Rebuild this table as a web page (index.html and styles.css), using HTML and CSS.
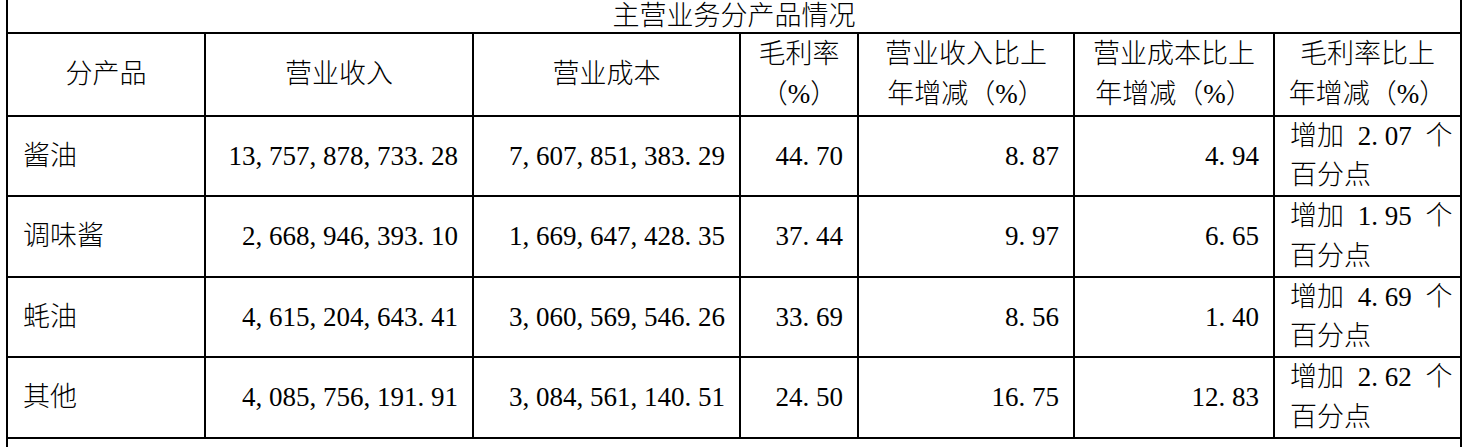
FILE: index.html
```html
<!DOCTYPE html>
<html lang="zh-CN">
<head>
<meta charset="utf-8">
<title>主营业务分产品情况</title>
<link rel="stylesheet" href="styles.css">
</head>
<body>
<table class="report">
  <colgroup>
    <col class="c1"><col class="c2"><col class="c3"><col class="c4"><col class="c5"><col class="c6"><col class="c7">
  </colgroup>
  <thead>
    <tr><th class="title" colspan="7">主营业务分产品情况</th></tr>
    <tr class="head">
      <th>分产品</th>
      <th>营业收入</th>
      <th>营业成本</th>
      <th>毛利率<br>（%）</th>
      <th>营业收入比上<br>年增减（%）</th>
      <th>营业成本比上<br>年增减（%）</th>
      <th>毛利率比上<br>年增减（%）</th>
    </tr>
  </thead>
  <tbody>
    <tr>
      <td class="name">酱油</td>
      <td class="num">13<span class="p">,</span>757<span class="p">,</span>878<span class="p">,</span>733<span class="p">.</span>28</td>
      <td class="num">7<span class="p">,</span>607<span class="p">,</span>851<span class="p">,</span>383<span class="p">.</span>29</td>
      <td class="num">44<span class="p">.</span>70</td>
      <td class="num">8<span class="p">.</span>87</td>
      <td class="num">4<span class="p">.</span>94</td>
      <td class="delta">增加 2<span class="p">.</span>07 个<br>百分点</td>
    </tr>
    <tr>
      <td class="name">调味酱</td>
      <td class="num">2<span class="p">,</span>668<span class="p">,</span>946<span class="p">,</span>393<span class="p">.</span>10</td>
      <td class="num">1<span class="p">,</span>669<span class="p">,</span>647<span class="p">,</span>428<span class="p">.</span>35</td>
      <td class="num">37<span class="p">.</span>44</td>
      <td class="num">9<span class="p">.</span>97</td>
      <td class="num">6<span class="p">.</span>65</td>
      <td class="delta">增加 1<span class="p">.</span>95 个<br>百分点</td>
    </tr>
    <tr>
      <td class="name">蚝油</td>
      <td class="num">4<span class="p">,</span>615<span class="p">,</span>204<span class="p">,</span>643<span class="p">.</span>41</td>
      <td class="num">3<span class="p">,</span>060<span class="p">,</span>569<span class="p">,</span>546<span class="p">.</span>26</td>
      <td class="num">33<span class="p">.</span>69</td>
      <td class="num">8<span class="p">.</span>56</td>
      <td class="num">1<span class="p">.</span>40</td>
      <td class="delta">增加 4<span class="p">.</span>69 个<br>百分点</td>
    </tr>
    <tr>
      <td class="name">其他</td>
      <td class="num">4<span class="p">,</span>085<span class="p">,</span>756<span class="p">,</span>191<span class="p">.</span>91</td>
      <td class="num">3<span class="p">,</span>084<span class="p">,</span>561<span class="p">,</span>140<span class="p">.</span>51</td>
      <td class="num">24<span class="p">.</span>50</td>
      <td class="num">16<span class="p">.</span>75</td>
      <td class="num">12<span class="p">.</span>83</td>
      <td class="delta">增加 2<span class="p">.</span>62 个<br>百分点</td>
    </tr>
    <tr class="note-row">
      <td class="note" colspan="7"></td>
    </tr>
  </tbody>
</table>
</body>
</html>
```

FILE: styles.css
```css
html,
body {
  margin: 0;
  padding: 0;
  background: #ffffff;
}

body {
  font-family: "Liberation Serif", "Noto Sans CJK SC", serif;
  font-size: 27px;
  color: #000000;
}

.report {
  border-collapse: separate;
  border-spacing: 0;
  table-layout: fixed;
  width: 1456px;
  margin: -2px 0 0 6px;
  border-top: 2px solid #000000;
  border-left: 2px solid #000000;
}

.report th,
.report td {
  border-right: 2px solid #000000;
  border-bottom: 2px solid #000000;
  padding: 0;
  font-weight: 300;
  line-height: 39.25px;
  vertical-align: middle;
  white-space: nowrap;
}

.c1 { width: 198px; }
.c2 { width: 268px; }
.c3 { width: 267px; }
.c4 { width: 118px; }
.c5 { width: 216px; }
.c6 { width: 200px; }
.c7 { width: 187px; }

.report th.title {
  line-height: 32.3px;
  text-align: center;
}

.head th {
  padding: 1.1px 0;
  text-align: center;
}

.report td.name {
  text-align: left;
  padding-left: 15px;
}

.report td.num {
  text-align: right;
  padding-right: 14px;
}

.report td.delta {
  text-align: left;
  padding-left: 15px;
  word-spacing: 7px;
}

.p {
  display: inline-block;
  width: 0.5em;
  text-align: left;
}

.report td.note {
  height: 40px;
}
```
